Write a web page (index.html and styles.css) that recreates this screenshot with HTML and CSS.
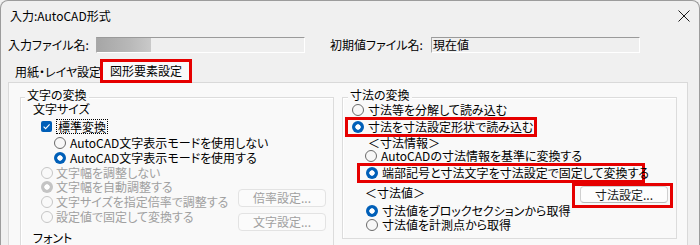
FILE: index.html
```html
<!DOCTYPE html>
<html lang="ja">
<head>
<meta charset="utf-8">
<title>入力:AutoCAD形式</title>
<link rel="stylesheet" href="styles.css">
</head>
<body>
<div class="window">
  <div class="titlebar">
    <span class="title">入力:AutoCAD形式</span>
    <svg class="close" width="12" height="12" viewBox="0 0 12 12"><path d="M0.5 0.5 L11.5 11.5 M11.5 0.5 L0.5 11.5" stroke="#1a1a1a" stroke-width="1" fill="none"/></svg>
  </div>
  <div class="filerow">
    <span class="lbl lbl1">入力ファイル名:</span>
    <div class="field field1"><span class="blur"></span></div>
    <span class="lbl lbl2">初期値ファイル名:</span>
    <div class="field field2">現在値</div>
  </div>
  <div class="tabs">
    <div class="tab">用紙・レイヤ設定</div>
    <div class="tab active">図形要素設定</div>
  </div>
  <div class="panel">
    <div class="group g-left">
      <div class="gtitle gt-left">文字の変換</div>
      <div class="sub sub1">文字サイズ</div>
      <div class="chkrow"><span class="chk"><svg width="11" height="11" viewBox="0 0 11 11"><path d="M2.6 5.6 L4.6 7.6 L8.6 3.4" stroke="#fff" stroke-width="1.1" fill="none"/></svg></span><span class="focus">標準変換</span></div>
      <div class="opt lv2"><span class="radio"></span>AutoCAD文字表示モードを使用しない</div>
      <div class="opt lv2"><span class="radio on"></span>AutoCAD文字表示モードを使用する</div>
      <div class="lower">
        <div class="dcol">
          <div class="opt dis h14"><span class="radio"></span>文字幅を調整しない</div>
          <div class="opt dis h14"><span class="radio on"></span>文字幅を自動調整する</div>
          <div class="opt dis h15"><span class="radio"></span>文字サイズを指定倍率で調整する</div>
          <div class="opt dis h16"><span class="radio"></span>設定値で固定して変換する</div>
        </div>
        <div class="btns">
          <button class="btn b1" disabled>倍率設定...</button>
          <button class="btn b2" disabled>文字設定...</button>
        </div>
      </div>
      <div class="sub sub2">フォント</div>
    </div>
    <div class="group g-right">
      <div class="gtitle gt-right">寸法の変換</div>
      <div class="opt r1"><span class="radio"></span>寸法等を分解して読み込む</div>
      <div class="mark mark1"><div class="opt"><span class="radio on"></span>寸法を寸法設定形状で読み込む</div></div>
      <div class="sub info">＜寸法情報＞</div>
      <div class="opt r3"><span class="radio"></span>AutoCADの寸法情報を基準に変換する</div>
      <div class="mark mark2"><div class="opt"><span class="radio on"></span>端部記号と寸法文字を寸法設定で固定して変換する</div></div>
      <div class="valrow">
        <span class="sub val">＜寸法値＞</span>
        <div class="mark mark3"><button class="btn b3">寸法設定...</button></div>
      </div>
      <div class="opt r5"><span class="radio on"></span>寸法値をブロックセクションから取得</div>
      <div class="opt r6"><span class="radio"></span>寸法値を計測点から取得</div>
    </div>
  </div>
</div>
</body>
</html>
```
FILE: styles.css
```css
* { box-sizing: border-box; }
html, body { margin: 0; padding: 0; background: #f0f0f0; }
body {
  font-family: "Noto Sans CJK JP", "Noto Sans", sans-serif;
  font-size: 12px;
  line-height: 16px;
  color: #000;
  font-feature-settings: "palt";
}
.window {
  width: 700px;
  height: 245px;
  overflow: hidden;
  background: #f0f0f0;
  border: 1px solid #9c9c9c;
  border-bottom: none;
  border-radius: 8px 8px 0 0;
}
.titlebar {
  height: 29px;
  display: flex;
  align-items: center;
  padding-left: 9px;
}
.title { line-height: 29px; }
.close { margin-left: auto; margin-right: 9px; }

.filerow {
  margin-top: 7px;
  height: 16px;
  display: flex;
  align-items: center;
  padding-left: 7px;
}
.lbl { white-space: nowrap; }
.lbl1 { width: 88px; }
.lbl2 { width: 101px; margin-left: 25px; }
.field {
  width: 209px;
  height: 16px;
  border-style: solid;
  border-width: 1px;
  border-color: #9a9a9a #ffffff #ffffff #a8a8a8;
  background: #efefef;
  line-height: 14px;
}
.field1 { display: flex; }
.blur {
  width: 54px;
  height: 14px;
  background: linear-gradient(90deg, #a6a6a6, #b8b8b8 60%, #c9c9c9);
}
.field2 { padding-left: 1px; }

.tabs {
  margin-top: 4px;
  height: 25px;
  display: flex;
  align-items: flex-end;
  padding-left: 8px;
  position: relative;
  z-index: 1;
}
.tab {
  width: 91px;
  padding: 0 0 2px 6px;
  white-space: nowrap;
}
.tab.active {
  width: 92px;
  height: 24px;
  margin-bottom: -1px;
  padding: 0 0 0 7px;
  border: 3px solid #e60000;
  background: #f9f9f9;
  line-height: 17px;
}

.panel {
  margin-left: 7px;
  width: 680px;
  height: 200px;
  border: 1px solid #d9d9d9;
  border-bottom: none;
  background: #f9f9f9;
  padding: 14px 0 0 11px;
  display: grid;
  grid-template-columns: 314px 335px;
  column-gap: 8px;
  align-items: start;
}
.group {
  position: relative;
  border: 1px solid #dcdcdc;
  box-shadow: inset 1px 1px 0 #ffffff;
}
.g-left { height: 200px; }
.g-right { padding-bottom: 6px; }
.gtitle {
  position: absolute;
  top: -10px;
  padding: 0 2px;
  line-height: 14px;
  background: #f9f9f9;
  white-space: nowrap;
}
.gt-left { left: 4px; }
.gt-right { left: 5px; }

.sub { white-space: nowrap; }
.sub1 { margin: 4px 0 0 12px; height: 14px; line-height: 14px; }
.sub2 { margin: 0 0 0 12px; height: 14px; line-height: 14px; }

.chkrow {
  margin: 2px 0 0 20px;
  height: 17px;
  display: flex;
  align-items: center;
}
.chk {
  width: 11px;
  height: 11px;
  border-radius: 2px;
  background: #005fb8;
  display: flex;
}
.focus {
  margin-left: 4px;
  border: 1px dotted #000;
  padding: 0 1px;
  line-height: 13px;
}

.opt {
  display: flex;
  align-items: center;
  white-space: nowrap;
  height: 16px;
  line-height: 16px;
}
.radio {
  flex: none;
  width: 12px;
  height: 12px;
  border-radius: 50%;
  border: 1px solid #6a6a6a;
  background: #f7f7f7;
  margin-right: 4px;
}
.radio.on {
  border: none;
  background: radial-gradient(circle, #ffffff 0 2.4px, #005fb8 3px);
}
.lv2 { margin-left: 33px; height: 15px; line-height: 15px; }

.lower {
  margin-top: 1px;
  display: flex;
  align-items: flex-start;
}
.dcol { margin-left: 20px; }
.opt.dis { color: #a0a0a0; }
.opt.dis .radio { border-color: #c6c6c6; background: #f9f9f9; margin-right: 3px; }
.opt.dis .radio.on { border: none; background: radial-gradient(circle, #ffffff 0 2.4px, #c4c4c4 3px); }
.h14 { height: 14px; line-height: 14px; }
.h15 { height: 15px; line-height: 15px; }
.h16 { height: 16px; line-height: 16px; }
.btns {
  margin-left: auto;
  margin-right: 7px;
  display: flex;
  flex-direction: column;
}
.btn {
  font: inherit;
  font-feature-settings: "palt";
  width: 88px;
  height: 18px;
  padding: 0;
  line-height: 16px;
  border-radius: 4px;
  text-align: center;
}
.btn:disabled {
  color: #a0a0a0;
  background: #fbfbfb;
  border: 1px solid #e3e3e3;
}
.b1 { margin-top: 23px; }
.b2 { margin-top: 6px; }

.r1 { margin: 4px 0 0 9px; }
.mark { border: 3px solid #e60000; }
.mark1 {
  margin: -1px 0 0 2px;
  width: 192px;
  height: 20px;
  padding-left: 4px;
}
.mark1 .opt, .mark2 .opt { height: 14px; line-height: 14px; }
.info { margin: -1px 0 0 25px; height: 13px; line-height: 13px; }
.r3 { margin: 0 0 0 22px; height: 14px; line-height: 14px; }
.mark2 {
  margin: 0 0 0 14px;
  width: 288px;
  height: 20px;
  padding-left: 6px;
}
.valrow {
  height: 20px;
  display: flex;
  align-items: flex-start;
}
.val { margin: 3px 0 0 22px; line-height: 14px; }
.mark3 {
  margin-left: auto;
  margin-right: 3px;
  width: 101px;
  height: 25px;
  padding: 0 0 0 5px;
  flex: none;
}
.b3 {
  height: 17px;
  line-height: 15px;
  color: #1a1a1a;
  background: #fdfdfd;
  border: 1px solid #d0d0d0;
  border-bottom-color: #b8b8b8;
}
.r5 { margin: 1px 0 0 23px; height: 14px; line-height: 14px; }
.r6 { margin: 0 0 0 23px; height: 14px; line-height: 14px; }
```
